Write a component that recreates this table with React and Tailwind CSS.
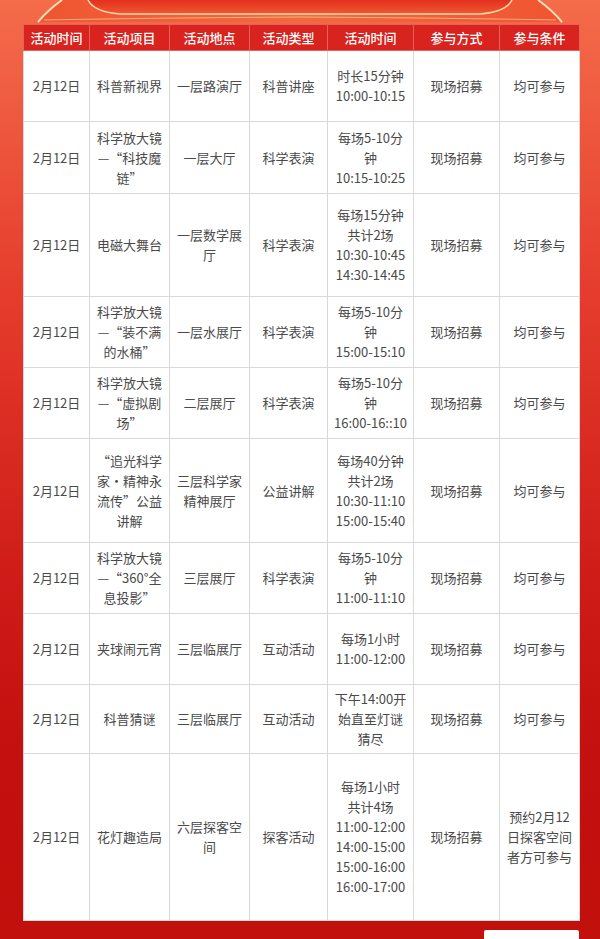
import React from "react";

const rows = [
  { h: 71, item: ["科普新视界"], place: ["一层路演厅"], type: "科普讲座", time: ["时长15分钟", "10:00-10:15"] },
  { h: 72, item: ["科学放大镜", "—“科技魔", "链”"], place: ["一层大厅"], type: "科学表演", time: ["每场5-10分", "钟", "10:15-10:25"] },
  { h: 103, item: ["电磁大舞台"], place: ["一层数学展", "厅"], type: "科学表演", time: ["每场15分钟", "共计2场", "10:30-10:45", "14:30-14:45"] },
  { h: 71, item: ["科学放大镜", "—“装不满", "的水桶”"], place: ["一层水展厅"], type: "科学表演", time: ["每场5-10分", "钟", "15:00-15:10"] },
  { h: 71, item: ["科学放大镜", "—“虚拟剧", "场”"], place: ["二层展厅"], type: "科学表演", time: ["每场5-10分", "钟", "16:00-16::10"] },
  { h: 104, item: ["“追光科学", "家·精神永", "流传”公益", "讲解"], place: ["三层科学家", "精神展厅"], type: "公益讲解", time: ["每场40分钟", "共计2场", "10:30-11:10", "15:00-15:40"] },
  { h: 71, item: ["科学放大镜", "—“360°全", "息投影”"], place: ["三层展厅"], type: "科学表演", time: ["每场5-10分", "钟", "11:00-11:10"] },
  { h: 71, item: ["夹球闹元宵"], place: ["三层临展厅"], type: "互动活动", time: ["每场1小时", "11:00-12:00"] },
  { h: 69, item: ["科普猜谜"], place: ["三层临展厅"], type: "互动活动", time: ["下午14:00开", "始直至灯谜", "猜尽"] },
  {
    h: 167,
    item: ["花灯趣造局"],
    place: ["六层探客空", "间"],
    type: "探客活动",
    time: ["每场1小时", "共计4场", "11:00-12:00", "14:00-15:00", "15:00-16:00", "16:00-17:00"],
    cond: ["预约2月12", "日探客空间", "者方可参与"],
  },
];

const heads = ["活动时间", "活动项目", "活动地点", "活动类型", "活动时间", "参与方式", "参与条件"];
const widths = [66, 80, 80, 78, 86, 86, 80];

const Lines = ({ lines }) => (
  <>
    {lines.map((l, i) => (
      <div key={i} className="whitespace-nowrap">{l}</div>
    ))}
  </>
);

function Ribbon() {
  return (
    <svg className="absolute left-0 top-0" width="600" height="24" viewBox="0 0 600 24">
      <defs>
        <linearGradient id="rb" x1="0" y1="0" x2="1" y2="0">
          <stop offset="0" stopColor="#ef5532" />
          <stop offset="0.5" stopColor="#f06a3c" />
          <stop offset="1" stopColor="#ef5532" />
        </linearGradient>
        <linearGradient id="rb2" x1="0" y1="0" x2="0" y2="1">
          <stop offset="0" stopColor="#e4301f" />
          <stop offset="1" stopColor="#f0582e" />
        </linearGradient>
      </defs>
      <path d="M38 22 Q48 10 62 0 L538 0 Q552 10 562 22 Z" fill="url(#rb)" />
      <path d="M38 22 Q48 10 62 0" stroke="#ffe0b8" strokeWidth="2" fill="none" />
      <path d="M562 22 Q552 10 538 0" stroke="#ffe0b8" strokeWidth="2" fill="none" />
      <path d="M88 0 Q94 12 120 14 L480 14 Q506 12 512 0 Z" fill="url(#rb2)" />
      <path d="M88 0 Q94 12 120 14 L480 14 Q506 12 512 0" stroke="#ffd8ae" strokeWidth="1.6" fill="none" />
      <path d="M44 20 Q150 18 300 17 Q450 18 556 20" stroke="#ffcfa0" strokeWidth="1" fill="none" opacity="0.7" />
    </svg>
  );
}

export default function App() {
  return (
    <div
      className="relative w-[600px] h-[939px] overflow-hidden bg-[linear-gradient(180deg,#f46c4a_0%,#e63e2e_30%,#d01d18_60%,#c4100e_80%,#c2100d_100%)] pt-[24px] pl-[23px]"
      style={{ fontFamily: '"Noto Sans CJK SC", "Noto Sans", sans-serif' }}
    >
      <Ribbon />
      <table className="relative border-collapse table-fixed w-[556px] text-[13px] leading-[20px] text-center">
        <colgroup>
          {widths.map((w, i) => (
            <col key={i} style={{ width: w }} />
          ))}
        </colgroup>
        <thead>
          <tr className="h-[26px] bg-[#d8231e] text-white">
            {heads.map((h, i) => (
              <th key={i} className="border border-[#e6615a] font-medium p-0 text-[13px]">
                {h}
              </th>
            ))}
          </tr>
        </thead>
        <tbody className="bg-white text-[#4a4a4a]">
          {rows.map((r, i) => (
            <tr key={i} style={{ height: r.h }}>
              <td className="border border-[#d9d9d9] px-1">2月12日</td>
              <td className="border border-[#d9d9d9] px-1"><Lines lines={r.item} /></td>
              <td className="border border-[#d9d9d9] px-1"><Lines lines={r.place} /></td>
              <td className="border border-[#d9d9d9] px-1">{r.type}</td>
              <td className="border border-[#d9d9d9] px-1"><Lines lines={r.time} /></td>
              <td className="border border-[#d9d9d9] px-1">现场招募</td>
              <td className="border border-[#d9d9d9] px-1">
                <Lines lines={r.cond || ["均可参与"]} />
              </td>
            </tr>
          ))}
        </tbody>
      </table>
      <div className="flex justify-end w-[556px] mt-[9px]">
        <div className="w-[95px] h-[12px] bg-white rounded-t-[2px]" />
      </div>
    </div>
  );
}
